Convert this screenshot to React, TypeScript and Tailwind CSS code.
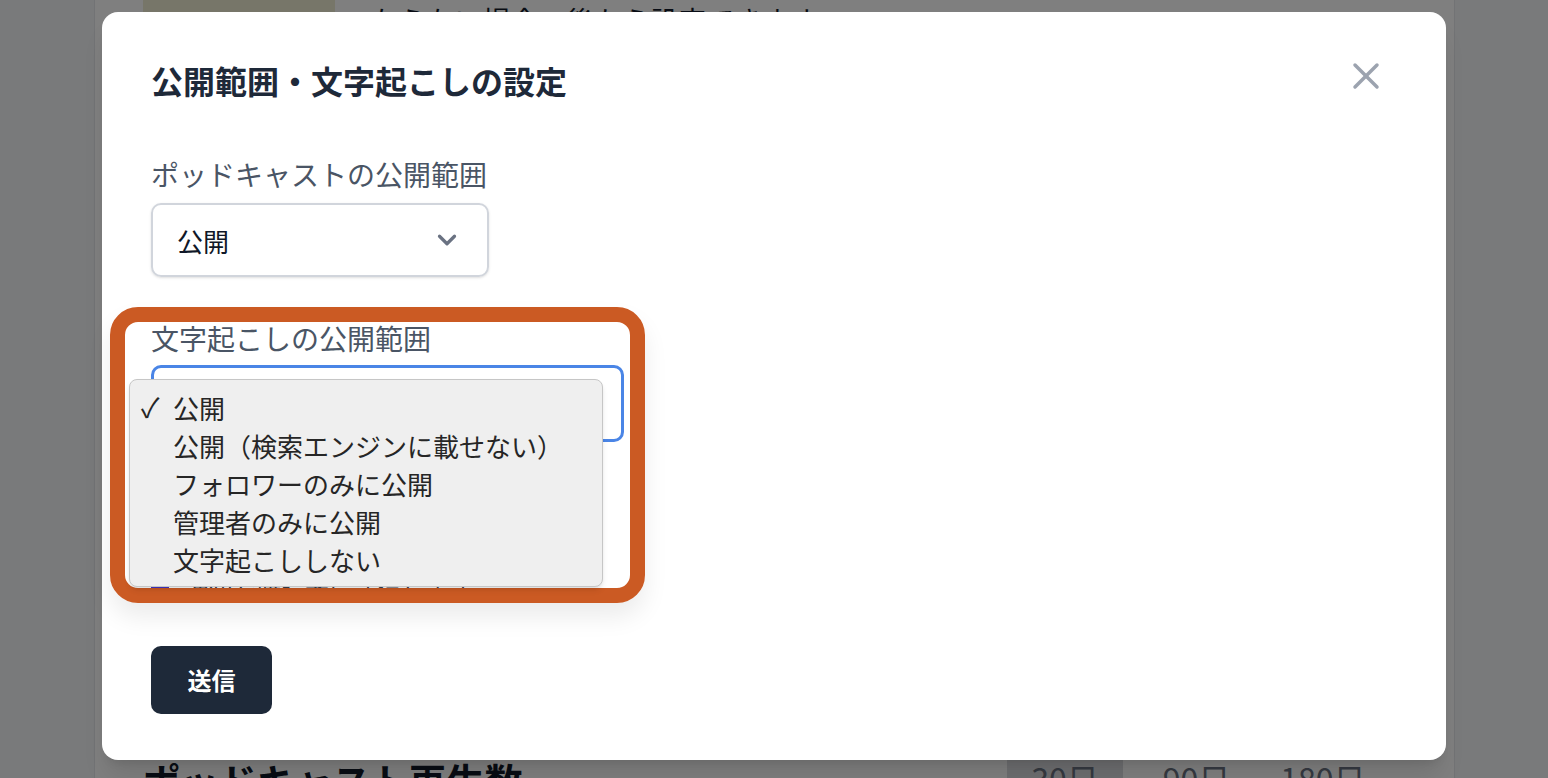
import { ChevronDown } from "lucide-react";

const jp = "font-['Noto_Sans_CJK_JP','Noto_Sans',sans-serif]";

const options = [
  "公開",
  "公開（検索エンジンに載せない）",
  "フォロワーのみに公開",
  "管理者のみに公開",
  "文字起こししない",
];

const Background = () => {
  return (
    <div className="h-[778px] bg-gray-100 overflow-hidden">
      <div className="mx-auto w-[1361px] h-full bg-white border-x border-gray-200 flex flex-col justify-between px-[48px]">
        <div className="flex items-end gap-[36px] -mt-[108px]">
          <div className="w-[192px] h-[120px] bg-[#efedd3]" />
          <p className="text-[28px] text-gray-900 leading-[40px] -mb-[28px]">ならない場合、後から設定できます</p>
        </div>
        <div className="flex items-start justify-between -mb-[30px]">
          <h2 className="text-[38px] font-bold text-gray-900 leading-[56px]">ポッドキャスト再生数</h2>
          <div className="flex text-[32px] text-gray-500 mr-[30px]">
            <span className="bg-[#dbdde1] px-[24px] h-[56px] pt-[2px]">30日</span>
            <span className="px-[40px] pt-[2px]">90日</span>
            <span className="px-[10px] pt-[2px]">180日</span>
          </div>
        </div>
      </div>
    </div>
  );
};

const Modal = () => {
  return (
    <div className="absolute left-[102px] top-[12px] w-[1344px] h-[748px] bg-white rounded-[16px] shadow-xl px-[49px] pt-[48px]">
      <button className="absolute right-[66px] top-[50px] w-[28px] h-[28px] flex items-center justify-center">
        <svg width="28" height="28" viewBox="0 0 28 28" fill="none" stroke="#9ca3af" strokeWidth="3.5" strokeLinecap="round">
          <path d="M3 3 L25 25" />
          <path d="M25 3 L3 25" />
        </svg>
      </button>
      <h1 className="text-[32px] font-bold text-gray-800 leading-[40px]">公開範囲・文字起こしの設定</h1>

      <label className="block mt-[54px] text-[28px] text-gray-600 leading-[40px]">ポッドキャストの公開範囲</label>
      <div className="mt-[9px] w-[338px] h-[74px] rounded-[10px] border-2 border-gray-300 shadow-sm flex items-center justify-between pl-[24px] pr-[25px]">
        <span className="text-[26px] text-gray-900">公開</span>
        <ChevronDown className="text-gray-500" size={30} strokeWidth={2.6} />
      </div>

      <label className="block mt-[41px] text-[28px] text-gray-600 leading-[40px]">文字起こしの公開範囲</label>
      <div className="mt-[7px] w-[473px] h-[77px] rounded-[10px] border-[3px] border-[#4a85e6]" />

      <div className="mt-[128px] flex items-center gap-[16px] h-[40px]">
        <span className="w-[18px] h-[20px] rounded-[3px] bg-[#4338ca]" />
        <span className="text-[24px] text-gray-700">通知を購読者に送信します</span>
      </div>

      <button className="mt-[36px] w-[121px] h-[68px] rounded-[10px] bg-gray-800 text-white text-[24px] font-bold">送信</button>
    </div>
  );
};

const Highlight = () => {
  return (
    <>
      <div className="absolute left-[110px] top-[307px] w-[535px] h-[296px] rounded-[28px] border-[15px] border-[#cb5a23] shadow-[0_14px_24px_rgba(0,0,0,0.08)]" />
      <div className="absolute left-[129px] top-[379px] w-[474px] h-[208px] rounded-[8px] bg-[#efefef] border border-[#c6c6c6] shadow-md pt-[8px]">
        {options.map((o, i) => (
          <div key={o} className="h-[38px] flex items-center text-[26px] text-[#262626]">
            <span className="w-[43px] pl-[11px] text-[27px]">{i === 0 ? "✓" : ""}</span>
            <span>{o}</span>
          </div>
        ))}
      </div>
    </>
  );
};

export default function App() {
  return (
    <div className={`relative w-[1548px] h-[778px] overflow-hidden ${jp}`}>
      <Background />
      <div className="absolute inset-0 bg-black/50" />
      <Modal />
      <Highlight />
    </div>
  );
}
